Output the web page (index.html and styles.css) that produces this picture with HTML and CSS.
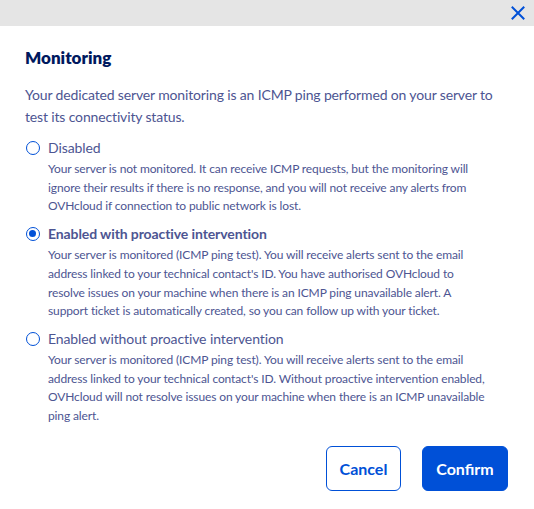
FILE: index.html
```html
<!DOCTYPE html>
<html lang="en">
<head>
<meta charset="utf-8">
<title>Monitoring</title>
<link rel="stylesheet" href="styles.css">
</head>
<body>
<div class="modal">
  <div class="topbar">
    <button class="close" aria-label="Close">
      <svg width="14" height="14" viewBox="0 0 14 14"><path d="M1.5 1.5 L12.5 12.5 M12.5 1.5 L1.5 12.5" stroke="#0050d7" stroke-width="2" stroke-linecap="square" fill="none"/></svg>
    </button>
  </div>
  <div class="content">
    <h2 class="title">Monitoring</h2>
    <p class="intro">Your dedicated server monitoring is an ICMP ping performed on your server to test its connectivity status.</p>
    <div class="options">
      <label class="option">
        <span class="radio"></span>
        <span class="text">
          <span class="label">Disabled</span>
          <span class="desc">Your server is not monitored. It can receive ICMP requests, but the monitoring will ignore their results if there is no response, and you will not receive any alerts from OVHcloud if connection to public network is lost.</span>
        </span>
      </label>
      <label class="option">
        <span class="radio checked"></span>
        <span class="text">
          <span class="label bold">Enabled with proactive intervention</span>
          <span class="desc">Your server is monitored (ICMP ping test). You will receive alerts sent to the email address linked to your technical contact's ID. You have authorised OVHcloud to<br>resolve issues on your machine when there is an ICMP ping unavailable alert. A support ticket is automatically created, so you can follow up with your ticket.</span>
        </span>
      </label>
      <label class="option">
        <span class="radio"></span>
        <span class="text">
          <span class="label">Enabled without proactive intervention</span>
          <span class="desc">Your server is monitored (ICMP ping test). You will receive alerts sent to the email address linked to your technical contact's ID. Without proactive intervention enabled, OVHcloud will not resolve issues on your machine when there is an ICMP unavailable ping alert.</span>
        </span>
      </label>
    </div>
    <div class="actions">
      <button class="btn secondary">Cancel</button>
      <button class="btn primary">Confirm</button>
    </div>
  </div>
</div>
</body>
</html>
```

FILE: styles.css
```css
* { box-sizing: border-box; }
body {
  margin: 0;
  background: #fff;
  font-family: Lato, "Open Sans", sans-serif;
  color: #4d5592;
}
.topbar {
  height: 26px;
  background: #e5e5e5;
  display: flex;
  justify-content: flex-end;
  align-items: center;
  padding-right: 8px;
}
.close {
  border: 0;
  background: none;
  padding: 0;
  width: 16px;
  height: 16px;
  display: flex;
  align-items: center;
  justify-content: center;
  cursor: pointer;
}
.content {
  padding: 20px 25px 0 25px;
}
.title {
  margin: 0;
  font-size: 17px;
  line-height: 24px;
  font-weight: 800;
  color: #00185e;
}
.intro {
  margin: 14px 0 0 0;
  font-size: 14px;
  letter-spacing: -0.15px;
  line-height: 22px;
  padding-right: 10px;
}
.options {
  margin-top: 9px;
  display: flex;
  flex-direction: column;
  gap: 7px;
}
.option {
  display: flex;
  gap: 8px;
  align-items: flex-start;
}
.radio {
  flex: none;
  width: 14px;
  height: 14px;
  margin: 4px 0 0 1px;
  border: 1.5px solid #0050d7;
  border-radius: 50%;
  background: #fff;
  position: relative;
}
.radio.checked::after {
  content: "";
  position: absolute;
  left: 2px;
  top: 2px;
  width: 7px;
  height: 7px;
  border-radius: 50%;
  background: #0050d7;
}
.text {
  display: flex;
  flex-direction: column;
  padding-right: 22px;
}
.label {
  font-size: 14px;
  letter-spacing: -0.1px;
  line-height: 22px;
}
.label.bold { font-weight: 700; }
.desc {
  font-size: 12px;
  letter-spacing: -0.12px;
  line-height: 18.7px;
  margin-top: 1px;
}
.actions {
  margin-top: 20px;
  display: flex;
  justify-content: flex-end;
  gap: 21px;
  padding-right: 1px;
}
.btn {
  height: 45px;
  border-radius: 6px;
  font-family: inherit;
  font-size: 16px;
  font-weight: 700;
  cursor: pointer;
}
.btn.secondary {
  width: 75px;
  background: #fff;
  border: 1px solid #0050d7;
  color: #0050d7;
}
.btn.primary {
  width: 86px;
  background: #0050d7;
  border: 1px solid #0050d7;
  color: #fff;
}
```
